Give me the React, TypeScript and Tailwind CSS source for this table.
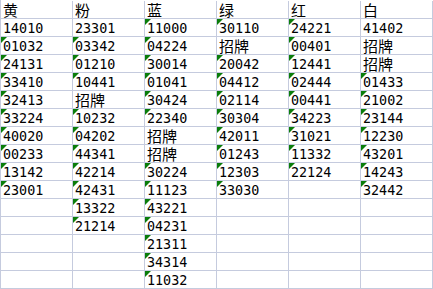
import React from 'react';

const columns: { title: string; cells: string[] }[] = [
  { title: '黄', cells: ['14010', '01032', '24131', '33410', '32413', '33224', '40020', '00233', '13142', '23001'] },
  { title: '粉', cells: ['23301', '03342', '01210', '10441', '招牌', '10232', '04202', '44341', '42214', '42431', '13322', '21214'] },
  { title: '蓝', cells: ['11000', '04224', '30014', '01041', '30424', '22340', '招牌', '招牌', '30224', '11123', '43221', '04231', '21311', '34314', '11032'] },
  { title: '绿', cells: ['30110', '招牌', '20042', '04412', '02114', '30304', '42011', '01243', '12303', '33030'] },
  { title: '红', cells: ['24221', '00401', '12441', '02444', '00441', '34223', '31021', '11332', '22124'] },
  { title: '白', cells: ['41402', '招牌', '招牌', '01433', '21002', '23144', '12230', '43201', '14243', '32442'] },
];

// cells stored as plain numbers (no green marker)
const plain = new Set(['0-0', '1-0', '5-0']);

const ROWS = 15;

function Cell({ value, marker }: { value?: string; marker: boolean }) {
  const isNum = value !== undefined && /^\d+$/.test(value);
  return (
    <div className="relative h-[18px] border-r border-b border-[#c5cbde] pl-[2px]">
      {marker && (
        <span className="absolute left-0 top-0 w-0 h-0 border-t-[6px] border-r-[6px] border-t-[#0a7d0a] border-r-transparent" />
      )}
      {value !== undefined && (
        <span
          className={
            isNum
              ? 'block pt-[2px] leading-[15px] text-[13.4px] text-black font-["DejaVu_Sans_Mono",monospace]'
              : 'block pt-px leading-[16px] text-[15px] text-black font-["Noto_Sans_CJK_SC",sans-serif]'
          }
        >
          {value}
        </span>
      )}
    </div>
  );
}

export default function App() {
  return (
    <div className="bg-white w-[433px] h-[289px] overflow-hidden">
      <div className="grid grid-cols-[repeat(6,72px)] border-l border-[#c5cbde] pt-px">
        {columns.map((c) => (
          <Cell key={'h' + c.title} value={c.title} marker={false} />
        ))}
        {Array.from({ length: ROWS }).map((_, r) =>
          columns.map((c, ci) => {
            const v = c.cells[r];
            const isNum = v !== undefined && /^\d+$/.test(v);
            return <Cell key={ci + '-' + r} value={v} marker={isNum && !plain.has(ci + '-' + r)} />;
          })
        )}
      </div>
    </div>
  );
}
